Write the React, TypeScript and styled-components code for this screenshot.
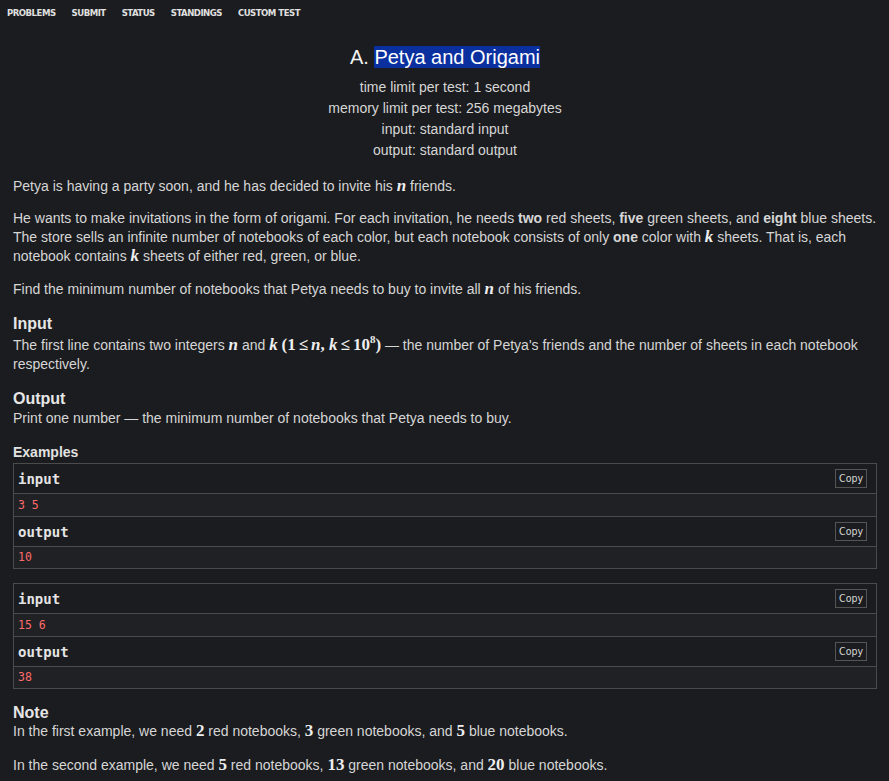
import React from "react";
import styled, { createGlobalStyle } from "styled-components";

const GlobalStyle = createGlobalStyle`
  html, body {
    margin: 0;
    padding: 0;
    background: #1b1c1f;
  }
  body {
    font-family: "Liberation Sans", Arial, sans-serif;
    color: #d6d6d6;
  }
`;

const Page = styled.div`
  padding: 0 12px 0 13px;
  min-height: 781px;
  box-sizing: border-box;
`;

const Nav = styled.nav`
  display: flex;
  gap: 16px;
  height: 24px;
  align-items: center;
  margin-left: -6px;
`;

const NavItem = styled.a`
  font-family: "DejaVu Sans Condensed", "DejaVu Sans", sans-serif;
  font-weight: bold;
  font-size: 9.5px;
  letter-spacing: -0.5px;
  color: #e0e0e0;
  text-decoration: none;
`;

const Header = styled.div`
  text-align: center;
  margin-top: 21px;
`;

const Title = styled.h1`
  margin: 0 0 8px;
  font-size: 20px;
  font-weight: normal;
  color: #f2f2f2;
  line-height: 24px;
`;

const Selected = styled.span`
  background: #0a2f9e;
  color: #ffffff;
`;

const Limit = styled.div`
  font-size: 14px;
  line-height: 21px;
`;

const Para = styled.p<{ $gap?: number }>`
  margin: ${(p) => p.$gap ?? 13}px 0 0;
  font-size: 14px;
  line-height: 19px;
`;

const SectionTitle = styled.h2<{ $top: number }>`
  margin: ${(p) => p.$top}px 0 0;
  font-size: 16px;
  line-height: 19px;
  font-weight: bold;
  color: #e6e6e6;
`;

const Plain = styled.p<{ $pad?: number }>`
  margin: 0;
  padding-top: ${(p) => p.$pad ?? 0}px;
  font-size: 14px;
  line-height: 19px;
`;

const Math = styled.span<{ $italic?: boolean }>`
  font-family: "Liberation Serif", "DejaVu Serif", serif;
  font-weight: bold;
  font-style: ${(p) => (p.$italic ? "italic" : "normal")};
  font-size: 17px;
  line-height: 0;
  color: #eeeeee;
`;

const Rel = styled.span`
  padding: 0 3px;
`;

const Sup = styled.sup`
  font-size: 11px;
  line-height: 0;
`;

const ExamplesTitle = styled.div`
  margin-top: 15px;
  font-size: 14px;
  font-weight: bold;
  line-height: 19px;
  color: #e2e2e2;
`;

const Sample = styled.div<{ $top: number }>`
  margin-top: ${(p) => p.$top}px;
  border: 1px solid #4b4b4b;
`;

const SampleHead = styled.div`
  display: flex;
  align-items: center;
  justify-content: space-between;
  height: 29px;
  padding: 0 9px 0 4px;
  border-bottom: 1px solid #4b4b4b;
  background: #1b1c1f;
`;

const HeadLabel = styled.span`
  font-family: "DejaVu Sans Mono", "Liberation Mono", monospace;
  font-weight: bold;
  font-size: 14px;
  color: #e4e4e4;
`;

const CopyButton = styled.span`
  font-family: "DejaVu Sans Condensed", "DejaVu Sans", sans-serif;
  font-size: 10.5px;
  color: #d6d6d6;
  border: 1px solid #555;
  padding: 1px 3px 2px;
  line-height: 14px;
`;

const SampleData = styled.pre<{ $last?: boolean }>`
  margin: 0;
  height: ${(p) => (p.$last ? 21 : 22)}px;
  line-height: ${(p) => (p.$last ? 21 : 22)}px;
  padding: 0 4px;
  background: #202124;
  font-family: "DejaVu Sans Mono", "Liberation Mono", monospace;
  font-size: 11.5px;
  color: #ff6b6b;
  border-bottom: ${(p) => (p.$last ? "none" : "1px solid #4b4b4b")};
`;

type SampleProps = { input: string; output: string; top: number };

const SampleBox = ({ input, output, top }: SampleProps) => (
  <Sample $top={top}>
    <SampleHead>
      <HeadLabel>input</HeadLabel>
      <CopyButton>Copy</CopyButton>
    </SampleHead>
    <SampleData>{input}</SampleData>
    <SampleHead>
      <HeadLabel>output</HeadLabel>
      <CopyButton>Copy</CopyButton>
    </SampleHead>
    <SampleData $last>{output}</SampleData>
  </Sample>
);

const navItems = ["PROBLEMS", "SUBMIT", "STATUS", "STANDINGS", "CUSTOM TEST"];

export default function App() {
  return (
    <>
      <GlobalStyle />
      <Page>
        <Nav>
          {navItems.map((item) => (
            <NavItem key={item}>{item}</NavItem>
          ))}
        </Nav>

        <Header>
          <Title>
            A. <Selected>Petya and Origami</Selected>
          </Title>
          <Limit>time limit per test: 1 second</Limit>
          <Limit>memory limit per test: 256 megabytes</Limit>
          <Limit>input: standard input</Limit>
          <Limit>output: standard output</Limit>
        </Header>

        <Para $gap={16}>
          Petya is having a party soon, and he has decided to invite his <Math $italic>n</Math> friends.
        </Para>
        <Para>
          He wants to make invitations in the form of origami. For each invitation, he needs <b>two</b> red
          sheets, <b>five</b> green sheets, and <b>eight</b> blue sheets. The store sells an infinite number of
          notebooks of each color, but each notebook consists of only <b>one</b> color with <Math $italic>k</Math>{" "}
          sheets. That is, each notebook contains <Math $italic>k</Math> sheets of either red, green, or blue.
        </Para>
        <Para $gap={14}>
          Find the minimum number of notebooks that Petya needs to buy to invite all <Math $italic>n</Math> of his
          friends.
        </Para>

        <SectionTitle $top={15}>Input</SectionTitle>
        <Plain $pad={3}>
          The first line contains two integers <Math $italic>n</Math> and <Math $italic>k</Math>{" "}
          <Math>
            (1<Rel>≤</Rel>
            <i>n</i>, <i>k</i>
            <Rel>≤</Rel>10<Sup>8</Sup>)
          </Math>{" "}
          — the number of Petya's friends and the number of sheets in each notebook respectively.
        </Plain>

        <SectionTitle $top={15}>Output</SectionTitle>
        <Plain $pad={1}>Print one number — the minimum number of notebooks that Petya needs to buy.</Plain>

        <ExamplesTitle>Examples</ExamplesTitle>
        <SampleBox input="3 5" output="10" top={1} />
        <SampleBox input="15 6" output="38" top={14} />

        <SectionTitle $top={14}>Note</SectionTitle>
        <Plain>
          In the first example, we need <Math>2</Math> red notebooks, <Math>3</Math> green notebooks, and{" "}
          <Math>5</Math> blue notebooks.
        </Plain>
        <Para $gap={15}>
          In the second example, we need <Math>5</Math> red notebooks, <Math>13</Math> green notebooks, and{" "}
          <Math>20</Math> blue notebooks.
        </Para>
      </Page>
    </>
  );
}
